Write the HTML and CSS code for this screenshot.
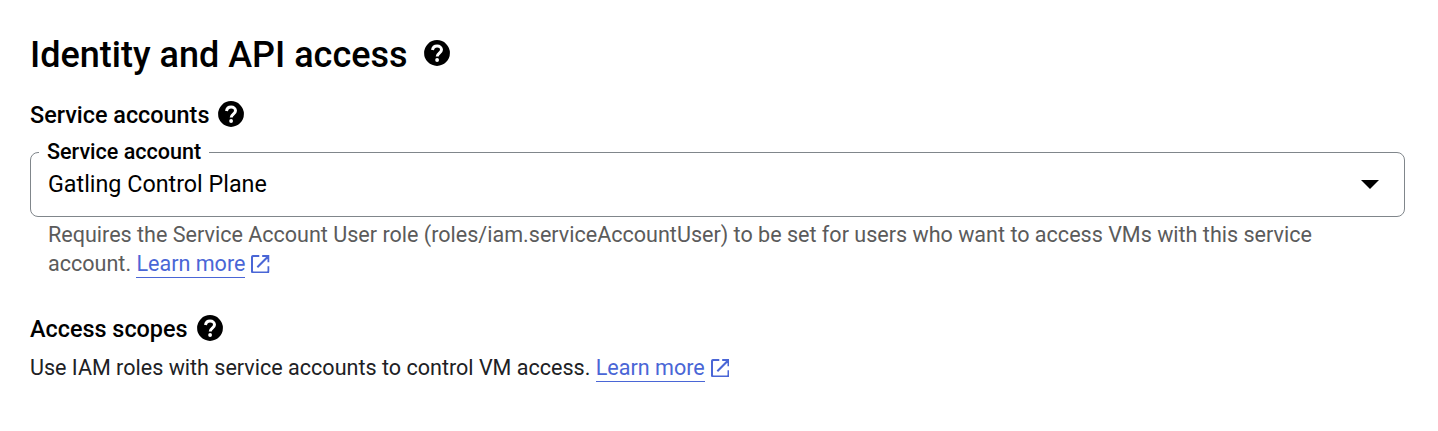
FILE: index.html
```html
<!DOCTYPE html>
<html lang="en">
<head>
<meta charset="utf-8">
<title>Identity and API access</title>
<link rel="stylesheet" href="styles.css">
</head>
<body>
<svg class="defs" width="0" height="0">
  <symbol id="help" viewBox="0 0 26 26"><circle cx="13" cy="13" r="12.900" fill="currentColor"/><path d="M8.500 10C8.900 7.500 10.600 6.100 13.100 6.100s4.400 1.500 4.400 3.700c0 3.200-4.300 3.500-4.300 6.700" fill="none" stroke="#fff" stroke-width="3"/><circle cx="13.100" cy="20" r="1.900" fill="#fff"/></symbol>
  <symbol id="launch" viewBox="0 0 19 19"><path d="M8.500 1H2.500Q1 1 1 2.500v14Q1 18 2.500 18h14q1.500 0 1.500-1.500v-5M11.500 1H18v6.500M17.500 1.500L6.500 12.500" fill="none" stroke="currentColor" stroke-width="2.100"/></symbol>
</svg>
<main class="page">
  <h1 class="title"><span>Identity and API access</span><svg class="help"><use href="#help"/></svg></h1>
  <h2 class="subtitle accounts"><span>Service accounts</span><svg class="help"><use href="#help"/></svg></h2>
  <div class="select">
    <span class="label">Service account</span>
    <span class="value">Gatling Control Plane</span>
    <svg class="arrow" viewBox="0 0 18 9"><path d="M0 0h18L9 9z"/></svg>
  </div>
  <p class="hint">Requires the Service Account User role (roles/iam.serviceAccountUser) to be set for users who want to access VMs with this service<br>account. <a class="link">Learn more</a><svg class="launch"><use href="#launch"/></svg></p>
  <h2 class="subtitle scopes"><span>Access scopes</span><svg class="help"><use href="#help"/></svg></h2>
  <p class="note">Use IAM roles with service accounts to control VM access. <a class="link">Learn more</a><svg class="launch"><use href="#launch"/></svg></p>
</main>
</body>
</html>
```
FILE: styles.css
```css
* { box-sizing: border-box; }
body { margin: 0; background: #fff; color: #000; font-family: Roboto, sans-serif; }
.defs { display: block; }
.page { padding: 33px 33px 0 30px; }
.title, .subtitle { display: flex; align-items: center; margin: 0; font-weight: 500; white-space: nowrap; }
.title { height: 40px; padding-top: 4px; font-size: 36px; gap: 16px; }
.title .help { margin-top: -5px; }
.subtitle { height: 30px; font-size: 23.400px; gap: 9px; }
.subtitle span { padding-top: 2px; }
.accounts { margin-top: 26px; }
.help { width: 26px; height: 26px; flex: none; }
.select { position: relative; display: flex; align-items: center; justify-content: space-between; height: 65px; margin-top: 23px; padding: 0 25px 0 17px; border: 1px solid #80868b; border-radius: 8px; }
.label { position: absolute; left: 8px; top: -14px; padding: 0 8px; background: #fff; font-size: 21.550px; line-height: 26px; font-weight: 500; }
.value { padding-bottom: 2px; font-size: 23.300px; line-height: 28px; }
.arrow { width: 18px; height: 9px; }
.hint, .note { margin: 0; font-size: 21.550px; line-height: 29px; white-space: nowrap; }
.hint { padding: 3px 0 0 18px; color: #5b5b5b; }
.note { margin-top: 10px; color: #202124; }
.link { display: inline-block; line-height: 26px; border-bottom: 1px solid #4a66d6; color: #4a66d6; }
.launch { width: 18.500px; height: 18.500px; margin-left: 6px; vertical-align: -2px; color: #4a66d6; }
.scopes { margin-top: 35px; }
```
